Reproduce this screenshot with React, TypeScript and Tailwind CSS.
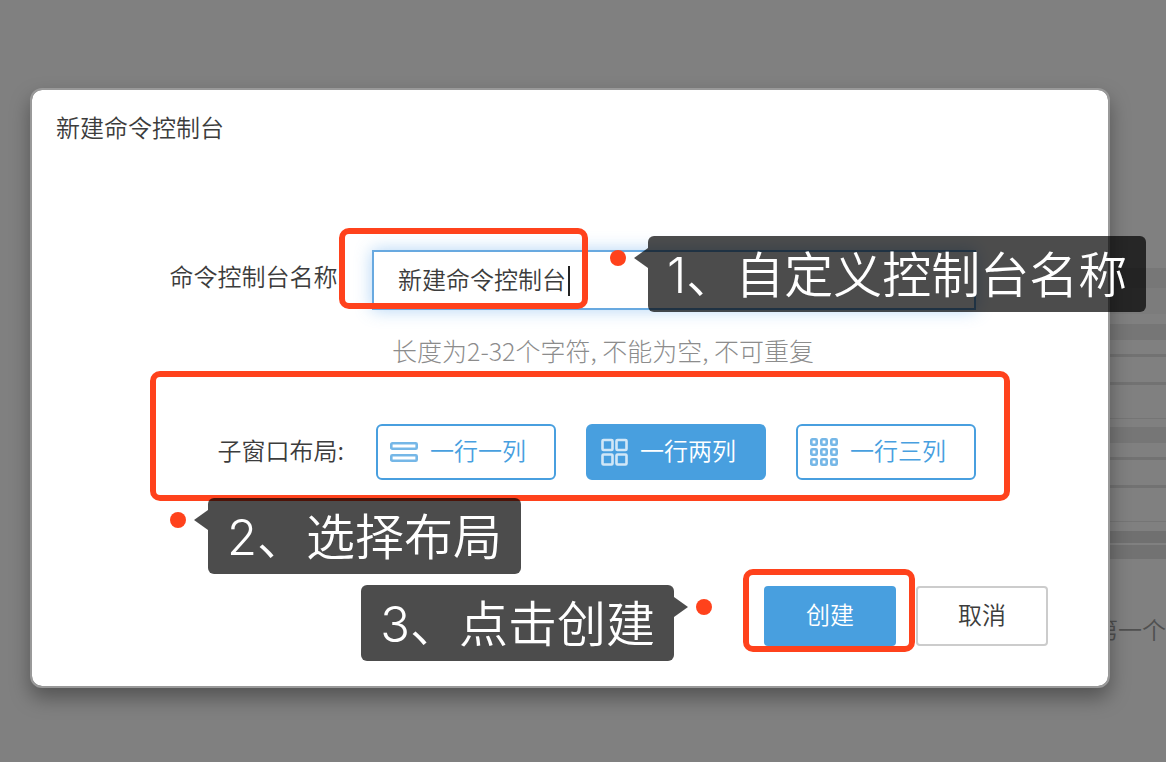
import React, { useState } from 'react'

const layouts = [
    { id: 'one', name: '一行一列', Icon: RowsIcon },
    { id: 'two', name: '一行两列', Icon: GridIcon },
    { id: 'three', name: '一行三列', Icon: DotsIcon },
]

function RowsIcon() {
    return (
        <svg className='w-7 h-7' viewBox='0 0 28 28' fill='none' stroke='currentColor' strokeWidth='2.6'>
            <rect x='1.3' y='5.3' width='25.4' height='5.4' rx='1' />
            <rect x='1.3' y='17.3' width='25.4' height='5.4' rx='1' />
        </svg>
    )
}

function GridIcon() {
    return (
        <svg className='w-7 h-7' viewBox='0 0 28 28' fill='none' stroke='currentColor' strokeWidth='2.6'>
            {[2, 16.5].map((y) =>
                [2.5, 16.5].map((x) => <rect key={x + '-' + y} x={x} y={y} width='10' height='10' rx='1' />)
            )}
        </svg>
    )
}

function DotsIcon() {
    return (
        <svg className='w-7 h-7' viewBox='0 0 28 28' fill='none' stroke='currentColor' strokeWidth='2.6'>
            {[1.3, 11.3, 21.3].map((y) =>
                [1.3, 11.3, 21.3].map((x) => <rect key={x + '-' + y} x={x} y={y} width='5.4' height='5.4' rx='1' />)
            )}
        </svg>
    )
}

// red frame around the part being explained
function Frame({ className }: { className: string }) {
    return <div className={'absolute border-6 border-[#ff421c] rounded-[10px] pointer-events-none ' + className} />
}

// dark bubble with an arrow and a red dot
function Callout({ text, flip, className }: { text: string; flip?: boolean; className: string }) {
    return (
        <div className={'absolute z-10 flex items-start pointer-events-none ' + (flip ? 'flex-row-reverse ' : '') + className}>
            <span className='w-4 h-4 mt-[14px] rounded-full bg-[#ff421c] shrink-0' />
            <svg className={'w-[14px] h-5 mt-3 shrink-0 ' + (flip ? 'mr-2 rotate-180' : 'ml-2')} viewBox='0 0 14 20'>
                <path d='M14 0 L0 10 L14 20 Z' fill='#000' fillOpacity='0.7' />
            </svg>
            <p className="px-[19px] h-[76px] leading-[80px] rounded-md bg-black/70 text-white text-[49px] whitespace-nowrap font-[350] font-[Inter,'Noto_Sans_CJK_SC',sans-serif]">
                {text}
            </p>
        </div>
    )
}

// the page lying under the overlay
function PageBehind() {
    return (
        <div className='absolute right-0 top-[268px] w-20 text-right'>
            <div className='h-5 bg-[#777777]' />
            <div className='h-[26px] bg-[#7c7c7c]' />
            <div className='mt-[10px] h-4 bg-[#767676]' />
            <div className='mt-[14px] h-[3px] bg-[#727272]' />
            <div className='mt-[25px] h-[3px] bg-[#727272]' />
            <div className='mt-[33px] h-px bg-[#757575]' />
            <div className='mt-2 h-4 bg-[#767676]' />
            <div className='mt-[14px] h-[3px] bg-[#727272]' />
            <div className='mt-[25px] h-[3px] bg-[#727272]' />
            <div className='mt-[33px] h-px bg-[#757575]' />
            <div className='mt-[9px] h-3 bg-[#707070]' />
            <div className='mt-[2px] h-[14px] bg-[#727272]' />
            <p className='mt-[52px] leading-9 text-[#505050] whitespace-nowrap'>第一个</p>
        </div>
    )
}

const App = () => {
    const [name, setName] = useState('新建命令控制台')
    const [layout, setLayout] = useState('two')

    return (
        <div className="relative min-h-screen overflow-hidden bg-[#808080] pt-[88px] pb-[74px] pl-[30px] pr-[56px] text-[24px] font-[350] text-[#3c3c3c] font-['Noto_Sans_CJK_SC',sans-serif]">
            <PageBehind />

            <div role='dialog' aria-labelledby='title' className='relative bg-white bg-clip-padding border-2 border-[#999999] rounded-xl shadow-[0_10px_20px_rgba(0,0,0,0.35)]'>
                <h1 id='title' className='px-6 pb-[2px] leading-[74px] font-[350]'>新建命令控制台</h1>

                <form onSubmit={(e) => e.preventDefault()}>
                    <div className='pt-[84px] pr-[132px] grid grid-cols-[312px_1fr] gap-x-7'>
                        <label htmlFor='name' className='text-right leading-[52px]'>命令控制台名称:</label>
                        <div className='relative'>
                            <input
                                id='name'
                                type='text'
                                value={name}
                                onChange={(e) => setName(e.target.value)}
                                className='block w-full h-[60px] px-6 pb-1 bg-white border-2 border-[#68a9e0] shadow-[0_0_16px_rgba(82,160,236,0.45)] outline-none'
                            />
                            <span className='absolute left-[196px] top-4 w-[2px] h-[30px] bg-[#222222]' />
                            <Frame className='-left-[33px] -top-[22px] w-[249px] h-[81px]' />
                            <Callout text='1、自定义控制台名称' className='left-[238px] -top-[14px]' />
                            <p className='mt-[22px] pl-5 leading-9 text-[25px] font-light text-[#8c8c8c]'>长度为2-32个字符, 不能为空, 不可重复</p>
                        </div>
                    </div>

                    <div className='relative mt-14 pr-[132px] grid grid-cols-[312px_1fr] gap-x-7'>
                        <span id='layout' className='text-right leading-[52px]'>子窗口布局:</span>
                        <div role='group' aria-labelledby='layout' className='flex justify-end gap-[30px]'>
                            {layouts.map(({ id, name, Icon }) => (
                                <button
                                    key={id}
                                    type='button'
                                    aria-pressed={layout === id}
                                    onClick={() => setLayout(id)}
                                    className={
                                        'flex items-center gap-3 w-[180px] h-14 pl-3 border-2 border-[#489fdf] rounded-md ' +
                                        (layout === id ? 'bg-[#489fdf] text-white' : 'bg-white text-[#489fdf]')
                                    }
                                >
                                    <span className='opacity-75'><Icon /></span>
                                    <span className='pb-1'>{name}</span>
                                </button>
                            ))}
                        </div>
                        <Frame className='left-[118px] right-[98px] -top-[53px] -bottom-[21px]' />
                        <Callout text='2、选择布局' className='left-[138px] top-[74px]' />
                    </div>

                    <div className='mt-[106px] pb-10 pr-[60px] flex justify-end gap-5'>
                        <div className='relative'>
                            <button type='submit' className='block w-[132px] h-[60px] pb-1 rounded-sm bg-[#489fdf] text-white'>创建</button>
                            <Frame className='-left-[21px] -right-[19px] -top-[17px] -bottom-[6px]' />
                            <Callout text='3、点击创建' flip className='right-full mr-[52px] -top-px' />
                        </div>
                        <button type='button' className='w-[132px] h-[60px] pb-1 rounded-sm border-2 border-[#cccccc] bg-white'>取消</button>
                    </div>
                </form>
            </div>
        </div>
    )
}

export default App
